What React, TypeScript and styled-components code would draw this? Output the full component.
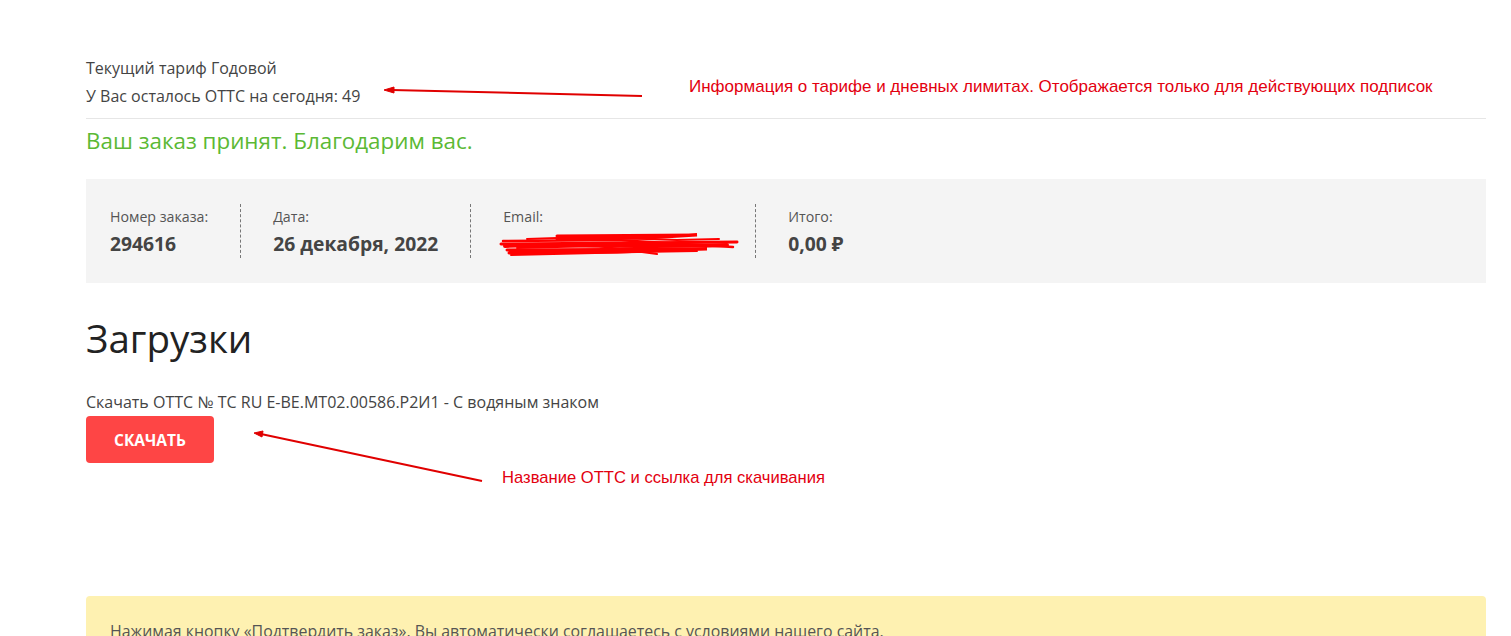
import React from "react";
import styled, { createGlobalStyle } from "styled-components";

const GlobalStyle = createGlobalStyle`
  html, body {
    margin: 0;
    padding: 0;
    background: #fff;
  }
  body {
    font-family: "Open Sans", "Noto Sans", sans-serif;
    color: #4a4a4a;
    overflow: hidden;
  }
`;

const Page = styled.div`
  position: relative;
  width: 1400px;
  margin-left: 86px;
  padding-top: 54px;
  height: 636px;
  box-sizing: border-box;
`;

const TariffInfo = styled.div`
  font-size: 16px;
  line-height: 28px;
  color: #444;
  padding-bottom: 8px;
  border-bottom: 1px solid #e6e6e6;
`;

const Notice = styled.p`
  margin: 7px 0 23px;
  font-size: 22.4px;
  line-height: 30px;
  color: #5bb934;
`;

const OrderOverview = styled.ul`
  list-style: none;
  margin: 0;
  padding: 25px 24px;
  background: #f4f4f4;
  display: flex;
  align-items: stretch;
`;

const OverviewItem = styled.li`
  padding: 0 32px;
  border-right: 1px dashed #777;
  display: flex;
  flex-direction: column;
  &:first-child {
    padding-left: 0;
  }
  &:last-child {
    border-right: 0;
  }
`;

const Label = styled.span`
  padding-top: 1px;
  font-size: 14.2px;
  line-height: 23px;
  color: #555;
`;

const Value = styled.strong<{ $width?: number }>`
  position: relative;
  margin-top: 2px;
  font-size: 19.3px;
  line-height: 28px;
  font-weight: 700;
  color: #444;
  min-width: ${(p) => (p.$width ? `${p.$width}px` : "auto")};
`;

const Scribble = styled.svg`
  position: absolute;
  left: -6px;
  top: 0;
`;

const Heading = styled.h2`
  margin: 32px 0 27px;
  font-size: 38.5px;
  line-height: 46px;
  font-weight: 400;
  color: #222;
`;

const DownloadTitle = styled.div`
  font-size: 16px;
  line-height: 28px;
  color: #444;
`;

const DownloadButton = styled.button`
  display: block;
  width: 128px;
  height: 47px;
  border: 0;
  border-radius: 4px;
  background: #fe4545;
  color: #fff;
  font-family: "Open Sans", sans-serif;
  font-size: 15.5px;
  font-weight: 700;
  cursor: pointer;
`;

const Terms = styled.div`
  margin-top: 133px;
  background: #fef1b1;
  border-radius: 4px;
  padding: 24px 24px;
  font-size: 15.9px;
  line-height: 22px;
  color: #555;
`;

const Annotation = styled.span<{ $x: number; $y: number; $size: number }>`
  position: absolute;
  left: ${(p) => p.$x}px;
  top: ${(p) => p.$y}px;
  font-family: "Liberation Sans", Arial, sans-serif;
  font-size: ${(p) => p.$size}px;
  line-height: 20px;
  color: #e3000f;
  white-space: nowrap;
`;

const Arrows = styled.svg`
  position: absolute;
  left: -86px;
  top: 0;
  pointer-events: none;
`;

const App = () => {
  return (
    <>
      <GlobalStyle />
      <Page>
        <TariffInfo>
          <div>Текущий тариф Годовой</div>
          <div>У Вас осталось ОТТС на сегодня: 49</div>
        </TariffInfo>
        <Notice>Ваш заказ принят. Благодарим вас.</Notice>

        <OrderOverview>
          <OverviewItem>
            <Label>Номер заказа:</Label>
            <Value>294616</Value>
          </OverviewItem>
          <OverviewItem>
            <Label>Дата:</Label>
            <Value>26 декабря, 2022</Value>
          </OverviewItem>
          <OverviewItem>
            <Label>Email:</Label>
            <Value $width={220}>
              <Scribble width="250" height="30" viewBox="0 0 250 30">
                <g stroke="#ff0000" strokeLinecap="round" fill="none">
                  <path d="M4 14 L240 12" strokeWidth="3" />
                  <path d="M60 6 L200 5 L150 8 L60 9" strokeWidth="3" />
                  <path d="M8 16 C60 13 120 18 230 15" strokeWidth="4" />
                  <path d="M10 20 L210 19 L120 22 L12 23" strokeWidth="3" />
                  <path d="M6 11 L120 10 L236 17" strokeWidth="2.5" />
                  <path d="M14 25 L140 22 L200 21" strokeWidth="2" />
                  <path d="M30 9 L90 7 L180 10 L222 9" strokeWidth="2" />
                  <path d="M20 18 L100 16 L160 24" strokeWidth="2" />
                </g>
              </Scribble>
            </Value>
          </OverviewItem>
          <OverviewItem>
            <Label>Итого:</Label>
            <Value>0,00 ₽</Value>
          </OverviewItem>
        </OrderOverview>

        <Heading>Загрузки</Heading>
        <DownloadTitle>
          Скачать ОТТС № ТС RU E-BE.MT02.00586.P2И1 - С водяным знаком
        </DownloadTitle>
        <DownloadButton>СКАЧАТЬ</DownloadButton>

        <Terms>
          Нажимая кнопку «Подтвердить заказ», Вы автоматически соглашаетесь с
          условиями нашего сайта.
        </Terms>

        <Annotation $x={603} $y={77} $size={17}>
          Информация о тарифе и дневных лимитах. Отображается только для
          действующих подписок
        </Annotation>
        <Annotation $x={416} $y={468} $size={16.6}>
          Название ОТТС и ссылка для скачивания
        </Annotation>

        <Arrows width="1511" height="636" viewBox="0 0 1511 636">
          <g stroke="#e00000" fill="#e00000" strokeWidth="2">
            <line x1="642" y1="96" x2="392" y2="90" />
            <path d="M384 90 L394 87 L394 93 Z" strokeWidth="1" />
            <line x1="482" y1="481" x2="261" y2="434" />
            <path d="M254 433 L263 431 L262 437 Z" strokeWidth="1" />
          </g>
        </Arrows>
      </Page>
    </>
  );
};

export default App;
